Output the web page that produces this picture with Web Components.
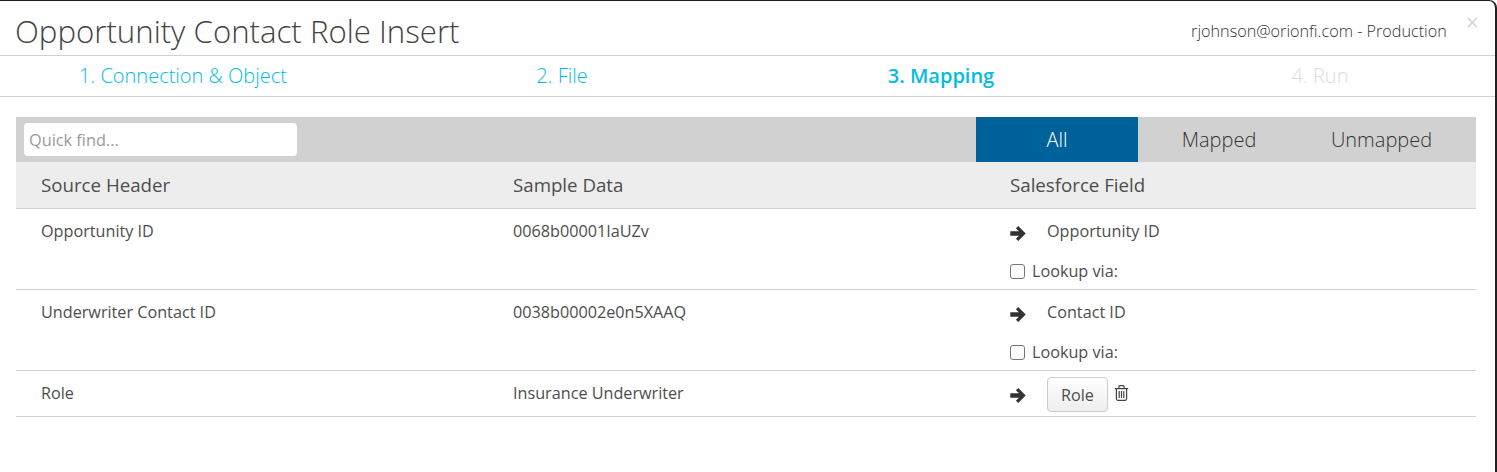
<!DOCTYPE html>
<html lang="en">
<head>
<meta charset="utf-8">
<title>Opportunity Contact Role Insert</title>
<style>
    html, body { margin: 0; height: 100%; background: #fff; }
    body { font-family: "Open Sans", sans-serif; color: #444; overflow: hidden; }
</style>
</head>
<body>
<insert-modal>
    <modal-header slot="header" heading="Opportunity Contact Role Insert" user="rjohnson@orionfi.com - Production"></modal-header>
    <wizard-steps slot="steps"></wizard-steps>
    <mapping-toolbar></mapping-toolbar>
    <mapping-head></mapping-head>
    <mapping-row source="Opportunity ID" sample="0068b00001IaUZv" field="Opportunity ID" lookup></mapping-row>
    <mapping-row source="Underwriter Contact ID" sample="0038b00002e0n5XAAQ" field="Contact ID" lookup></mapping-row>
    <mapping-row source="Role" sample="Insurance Underwriter" button="Role"></mapping-row>
</insert-modal>

<script>
class InsertModal extends HTMLElement {
    constructor() {
        super();
        this.attachShadow({ mode: 'open' });
    }

    connectedCallback() {
        this.shadowRoot.innerHTML = `
            <style>
                :host {
                    display: block;
                    height: 472px;
                    box-sizing: border-box;
                    border-top: 1px solid #1f1f1f;
                    border-right: 2px solid #1f1f1f;
                    border-top-right-radius: 8px;
                    overflow: hidden;
                    background: #fff;
                }
                .body { padding: 20px 19px 0 16px; }
            </style>
            <slot name="header"></slot>
            <slot name="steps"></slot>
            <div class="body"><slot></slot></div>`;
    }
}

class ModalHeader extends HTMLElement {
    constructor() {
        super();
        this.attachShadow({ mode: 'open' });
    }

    connectedCallback() {
        this.shadowRoot.innerHTML = `
            <style>
                :host {
                    display: flex;
                    align-items: flex-start;
                    height: 54px;
                    border-bottom: 1px solid #d2d2d2;
                    padding: 0 16px 0 15px;
                }
                h1 {
                    flex: 1;
                    margin: 9px 0 0;
                    font: 300 31.2px/42px "Open Sans", sans-serif;
                    color: #444;
                }
                .user {
                    margin: 19px 19px 0 0;
                    font: 300 16.2px/22px "Open Sans", sans-serif;
                    color: #333;
                }
                .close {
                    margin-top: 9px;
                    font: 400 23px/24px "Open Sans", sans-serif;
                    color: #d4d4d4;
                }
            </style>
            <h1>${this.getAttribute('heading')}</h1>
            <span class="user">${this.getAttribute('user')}</span>
            <span class="close">×</span>`;
    }
}

class WizardSteps extends HTMLElement {
    constructor() {
        super();
        this.attachShadow({ mode: 'open' });
    }

    connectedCallback() {
        this.shadowRoot.innerHTML = `
            <style>
                :host {
                    display: block;
                    height: 40px;
                    border-bottom: 1px solid #d2d2d2;
                    overflow: hidden;
                }
                .grid {
                    display: grid;
                    grid-template-columns: repeat(4, 379px);
                    margin-left: -6.5px;
                    font: 300 20px/40px "Open Sans", sans-serif;
                    text-align: center;
                    color: #00bce4;
                }
                .active { font-weight: 600; }
                .off { color: #dcdcdc; }
            </style>
            <div class="grid">
                <span>1. Connection &amp; Object</span>
                <span>2. File</span>
                <span class="active">3. Mapping</span>
                <span class="off">4. Run</span>
            </div>`;
    }
}

class MappingToolbar extends HTMLElement {
    constructor() {
        super();
        this.attachShadow({ mode: 'open' });
    }

    connectedCallback() {
        this.shadowRoot.innerHTML = `
            <style>
                :host {
                    display: flex;
                    align-items: center;
                    height: 45px;
                    background: #d1d1d1;
                }
                input {
                    box-sizing: border-box;
                    width: 273px;
                    height: 33px;
                    margin-left: 8px;
                    padding: 0 5px;
                    border: 0;
                    border-radius: 4px;
                    background: #fff;
                    font: 400 16.3px "Open Sans", sans-serif;
                    color: #444;
                }
                input::placeholder { color: #999; opacity: 1; }
                .tabs { display: flex; margin-left: auto; height: 100%; padding-right: 13px; }
                .tab {
                    font: 300 20px/45px "Open Sans", sans-serif;
                    color: #333;
                    text-align: center;
                    width: 162px;
                }
                .tab.on { background: #00629b; color: #fff; }
                .tab:last-child { width: 163px; }
            </style>
            <input placeholder="Quick find...">
            <div class="tabs">
                <div class="tab on">All</div>
                <div class="tab">Mapped</div>
                <div class="tab">Unmapped</div>
            </div>`;
    }
}

class MappingHead extends HTMLElement {
    constructor() {
        super();
        this.attachShadow({ mode: 'open' });
    }

    connectedCallback() {
        this.shadowRoot.innerHTML = `
            <style>
                :host {
                    display: grid;
                    grid-template-columns: 472px 497px 1fr;
                    height: 47px;
                    box-sizing: border-box;
                    border-bottom: 1px solid #d2d2d2;
                    background: #ededed;
                    padding-left: 25px;
                    font: 400 18.7px/46px "Open Sans", sans-serif;
                    color: #4d4d4d;
                }
            </style>
            <span>Source Header</span>
            <span>Sample Data</span>
            <span>Salesforce Field</span>`;
    }
}

class MappingRow extends HTMLElement {
    constructor() {
        super();
        this.attachShadow({ mode: 'open' });
    }

    connectedCallback() {
        const boton = this.getAttribute('button');
        const destino = boton
            ? `<button>${boton}</button>${this.iconoPapelera()}`
            : `<span class="field">${this.getAttribute('field')}</span>`;
        const lookup = this.hasAttribute('lookup')
            ? `<label><span class="box"></span>Lookup via:</label>`
            : '';

        this.shadowRoot.innerHTML = `
            <style>
                :host {
                    display: grid;
                    grid-template-columns: 472px 497px 1fr;
                    box-sizing: border-box;
                    border-bottom: 1px solid #d2d2d2;
                    padding-left: 25px;
                    font: 400 16.2px/22px "Open Sans", sans-serif;
                    color: #4d4d4d;
                }
                .cell { padding-top: 11px; }
                .map { display: flex; align-items: flex-start; min-height: 22px; }
                .arrow { width: 16px; height: 15px; margin: 6px 21px 0 0; flex: none; }
                .target { padding-top: 11px; padding-bottom: ${lookup ? 7 : 4}px; }
                label { display: flex; align-items: center; margin-top: 18px; height: 22px; }
                .box {
                    width: 15px;
                    height: 15px;
                    box-sizing: border-box;
                    margin: 1px 7px 0 0;
                    border: 1px solid #777;
                    border-radius: 3px;
                    background: #fff;
                }
                button {
                    height: 35px;
                    width: 61px;
                    margin-top: -5px;
                    padding: 0;
                    border: 1px solid #ccc;
                    border-radius: 4px;
                    background: linear-gradient(#fff, #ededed);
                    font: 400 16.2px "Open Sans", sans-serif;
                    color: #4d4d4d;
                }
                .trash { width: 15px; height: 16px; margin: 3px 0 0 6px; flex: none; }
            </style>
            <div class="cell">${this.getAttribute('source')}</div>
            <div class="cell">${this.getAttribute('sample')}</div>
            <div class="target">
                <div class="map">${this.iconoFlecha()}${destino}</div>
                ${lookup}
            </div>`;
    }

    iconoFlecha() {
        return `<svg class="arrow" viewBox="0 0 16 15"><path fill="#333" d="M8.2 0 15.7 7.5 8.2 15 5.9 12.7 9 9.8H.3V5.2H9L5.9 2.3z"/></svg>`;
    }

    iconoPapelera() {
        return `<svg class="trash" viewBox="0 0 15 16" fill="none" stroke="#444" stroke-width="1.2"><path d="M.8 3.6h13.4M4.9 3.6V1.8c0-.7.4-1.1 1-1.1h3.2c.6 0 1 .4 1 1.1v1.8M2.4 3.6v10.2c0 .9.5 1.5 1.3 1.5h7.6c.8 0 1.3-.6 1.3-1.5V3.6M5.2 6v7M7.5 6v7M9.8 6v7"/></svg>`;
    }
}

customElements.define('insert-modal', InsertModal);
customElements.define('modal-header', ModalHeader);
customElements.define('wizard-steps', WizardSteps);
customElements.define('mapping-toolbar', MappingToolbar);
customElements.define('mapping-head', MappingHead);
customElements.define('mapping-row', MappingRow);
</script>
</body>
</html>
